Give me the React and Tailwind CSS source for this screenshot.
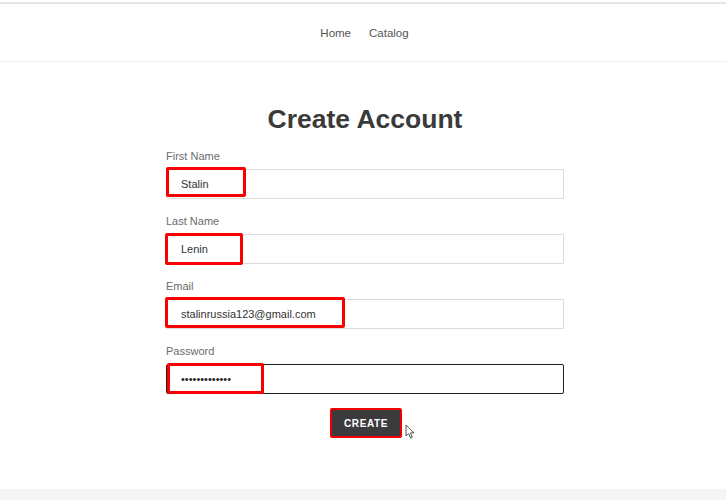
import { useState } from "react";

const fields = [
    { label: "First Name", value: "Stalin", type: "text", mark: "left-0 top-[-2px] w-[80px] h-[30px]" },
    { label: "Last Name", value: "Lenin", type: "text", mark: "left-[-1px] top-[-1px] w-[78px] h-[32px]" },
    { label: "Email", value: "stalinrussia123@gmail.com", type: "email", mark: "left-[-1px] top-[-2px] w-[180px] h-[31px]" },
    { label: "Password", value: "stalin1234567", type: "password", mark: "left-[1px] top-[-1px] w-[97px] h-[31px]" },
];

const Field = ({ field }) => {
    const [value, setValue] = useState(field.value);
    const isPassword = field.type === "password";
    return (
        <div className="flex flex-col">
            <label className="text-[11px] leading-4 text-[#6b6b6b] mb-[5px]">{field.label}</label>
            <div className="relative">
                <input
                    type={field.type}
                    value={value}
                    onChange={(e) => setValue(e.target.value)}
                    className={
                        isPassword
                            ? "w-full h-[30px] px-[14px] text-[11px] text-[#222] bg-white border-[1.5px] border-[#1f1f1f] rounded-[2px] outline-none"
                            : "w-full h-[30px] px-[14px] text-[11px] text-[#333] bg-white border border-[#dcdcdc] rounded-[1px] outline-none"
                    }
                />
                {/* red annotation box */}
                <div className={"absolute pointer-events-none border-[3px] border-[#fa0000] rounded-[2px] " + field.mark}></div>
            </div>
        </div>
    );
};

const Cursor = () => (
    <svg width="11" height="15" viewBox="0 0 11 15" className="absolute left-[75px] top-[16px]">
        <path d="M1 1 L1 12 L3.6 9.6 L5.6 14 L7.4 13.2 L5.4 8.9 L9 8.9 Z" fill="#fff" stroke="#555" strokeWidth="1" strokeLinejoin="round" />
    </svg>
);

const App = () => {
    return (
        <div className="h-[500px] w-full overflow-hidden flex flex-col bg-white" style={{ fontFamily: '"Liberation Sans", Arial, sans-serif' }}>
            <header className="mt-[2px] border-t-2 border-[#e6e6ea] h-[60px] border-b border-b-[#efefef] flex justify-center items-center gap-[18px] text-[11.5px] text-[#555] pt-[3px] pl-[3px]">
                <a className="cursor-pointer">Home</a>
                <a className="cursor-pointer">Catalog</a>
            </header>

            <main className="flex-1 flex flex-col items-center pl-[4px]">
                <h1 className="mt-[41px] text-[26.5px] leading-8 font-bold text-[#3a3a3a]">Create Account</h1>
                <form className="w-[398px] mt-[13px] flex flex-col gap-[14px]" onSubmit={(e) => e.preventDefault()}>
                    {fields.map((f) => (
                        <Field key={f.label} field={f} />
                    ))}
                </form>
                <div className="relative mt-[14px] ml-[2px]">
                    <button className="w-[72px] h-[30px] bg-[#3b3b3d] border-2 border-[#f00000] rounded-[2px] text-white text-[10px] font-bold tracking-[0.6px] cursor-pointer">
                        CREATE
                    </button>
                    <Cursor />
                </div>
            </main>

            <footer className="h-[11px] bg-[#f5f4f6]"></footer>
        </div>
    );
};

export default App;
